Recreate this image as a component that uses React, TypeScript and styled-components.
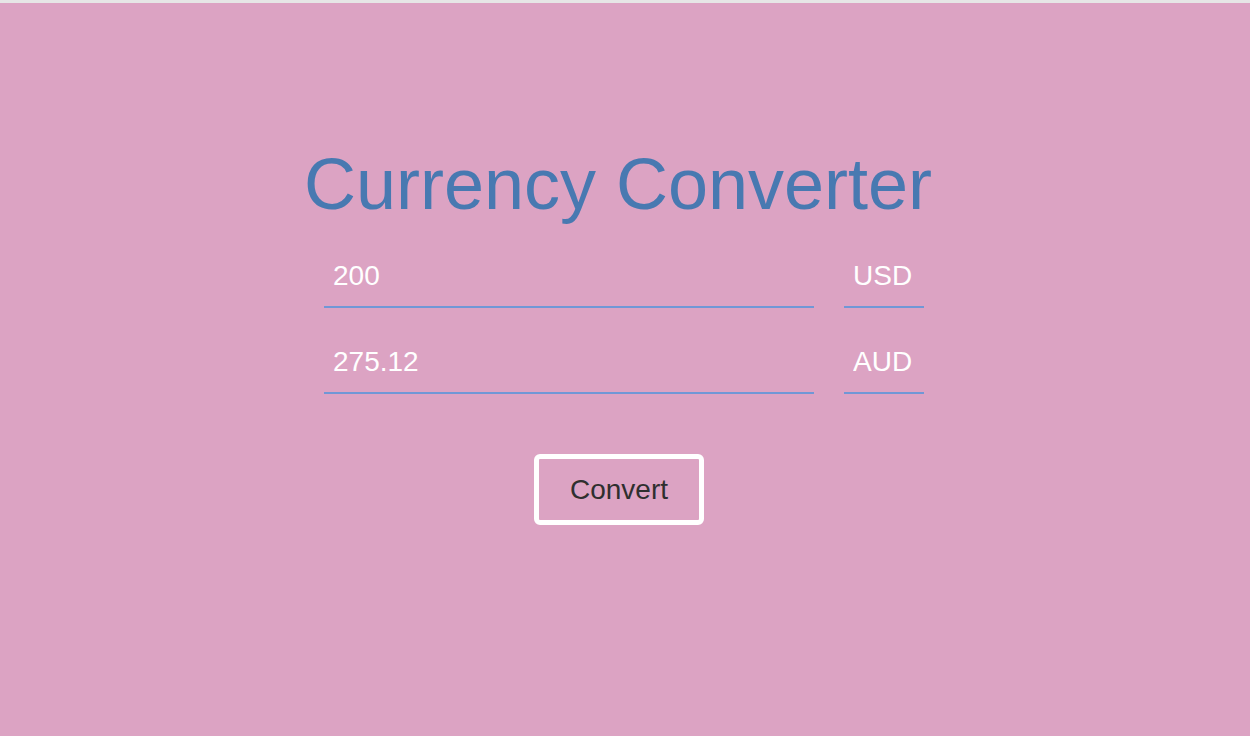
import React from 'react'
import styled, { createGlobalStyle } from 'styled-components'

const GlobalStyle = createGlobalStyle`
  html, body {
    margin: 0;
    padding: 0;
    background: #dca3c3;
  }
  body {
    border-top: 3px solid #e6e6e6;
    font-family: "Liberation Sans", Arial, Helvetica, sans-serif;
  }
`

const Page = styled.main`
  min-height: 733px;
  padding: 145px 2px 0 0;
  box-sizing: border-box;
`

const Converter = styled.div`
  width: 600px;
  margin: 0 auto;
  display: flex;
  flex-direction: column;
  align-items: center;
`

const Title = styled.h1`
  margin: 0 0 32px;
  padding-right: 12px;
  font-size: 72px;
  line-height: 1;
  font-weight: normal;
  color: #4879b1;
  white-space: nowrap;
`

const Row = styled.div`
  display: flex;
  gap: 30px;
  width: 100%;
  margin-bottom: 30px;
`

const Field = styled.input<{ $width: number }>`
  width: ${p => p.$width}px;
  height: 56px;
  box-sizing: border-box;
  padding: 0 9px 6px;
  border: none;
  border-bottom: 2px solid #7097d6;
  background: transparent;
  color: #fff;
  font-family: inherit;
  font-size: 28px;
  outline: none;
`

const ConvertButton = styled.button`
  margin-top: 30px;
  margin-right: 10px;
  width: 170px;
  height: 71px;
  box-sizing: border-box;
  border: 5px solid #fff;
  border-radius: 6px;
  background: transparent;
  color: #2f2f2f;
  font-family: inherit;
  font-size: 28px;
  cursor: pointer;
`

const rows = [
  { amount: '200', currency: 'USD' },
  { amount: '275.12', currency: 'AUD' },
]

export default function App() {
  return (
    <>
      <GlobalStyle />
      <Page>
        <Converter>
          <Title>Currency Converter</Title>
          {rows.map(r => (
            <Row key={r.currency}>
              <Field $width={490} defaultValue={r.amount} />
              <Field $width={80} defaultValue={r.currency} />
            </Row>
          ))}
          <ConvertButton>Convert</ConvertButton>
        </Converter>
      </Page>
    </>
  )
}
